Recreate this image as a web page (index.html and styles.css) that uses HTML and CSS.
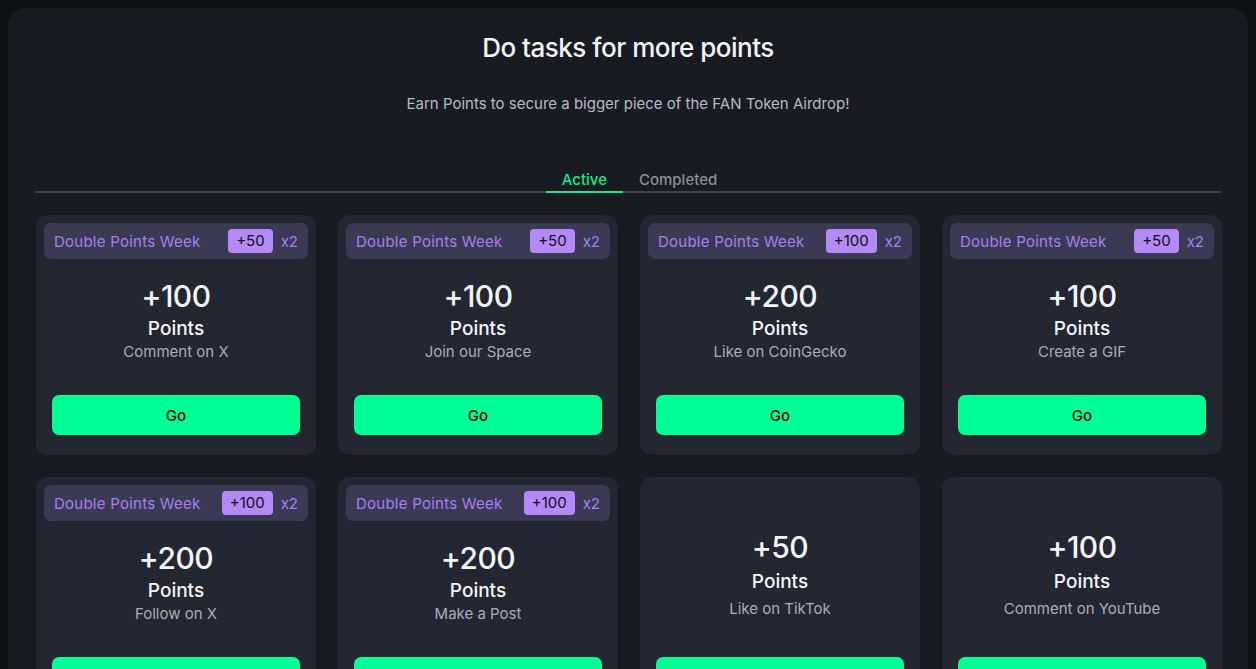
FILE: index.html
```html
<!DOCTYPE html>
<html lang="en">
<head>
<meta charset="utf-8">
<title>Do tasks for more points</title>
<link rel="stylesheet" href="styles.css">
</head>
<body>
<main class="panel">
  <h1 class="title">Do tasks for more points</h1>
  <p class="subtitle">Earn Points to secure a bigger piece of the FAN Token Airdrop!</p>

  <nav class="tabs">
    <button class="tab tab-active">Active</button>
    <button class="tab">Completed</button>
  </nav>

  <section class="grid">
    <article class="card">
      <div class="bonus"><span class="bonus-label">Double Points Week</span><span class="pill">+50</span><span class="mult">x2</span></div>
      <div class="amount">+100</div>
      <div class="unit">Points</div>
      <div class="desc">Comment on X</div>
      <button class="go">Go</button>
    </article>
    <article class="card">
      <div class="bonus"><span class="bonus-label">Double Points Week</span><span class="pill">+50</span><span class="mult">x2</span></div>
      <div class="amount">+100</div>
      <div class="unit">Points</div>
      <div class="desc">Join our Space</div>
      <button class="go">Go</button>
    </article>
    <article class="card">
      <div class="bonus"><span class="bonus-label">Double Points Week</span><span class="pill">+100</span><span class="mult">x2</span></div>
      <div class="amount">+200</div>
      <div class="unit">Points</div>
      <div class="desc">Like on CoinGecko</div>
      <button class="go">Go</button>
    </article>
    <article class="card">
      <div class="bonus"><span class="bonus-label">Double Points Week</span><span class="pill">+50</span><span class="mult">x2</span></div>
      <div class="amount">+100</div>
      <div class="unit">Points</div>
      <div class="desc">Create a GIF</div>
      <button class="go">Go</button>
    </article>

    <article class="card">
      <div class="bonus"><span class="bonus-label">Double Points Week</span><span class="pill">+100</span><span class="mult">x2</span></div>
      <div class="amount">+200</div>
      <div class="unit">Points</div>
      <div class="desc">Follow on X</div>
      <button class="go">Go</button>
    </article>
    <article class="card">
      <div class="bonus"><span class="bonus-label">Double Points Week</span><span class="pill">+100</span><span class="mult">x2</span></div>
      <div class="amount">+200</div>
      <div class="unit">Points</div>
      <div class="desc">Make a Post</div>
      <button class="go">Go</button>
    </article>
    <article class="card card-plain">
      <div class="amount">+50</div>
      <div class="unit">Points</div>
      <div class="desc">Like on TikTok</div>
      <button class="go">Go</button>
    </article>
    <article class="card card-plain">
      <div class="amount">+100</div>
      <div class="unit">Points</div>
      <div class="desc">Comment on YouTube</div>
      <button class="go">Go</button>
    </article>
  </section>
</main>
</body>
</html>
```

FILE: styles.css
```css
* { box-sizing: border-box; }

html, body {
  margin: 0;
  padding: 0;
  background: #0d1013;
}

body {
  padding: 8px;
  font-family: Inter, "Noto Sans", "Liberation Sans", sans-serif;
  color: #f2f3f5;
}

.panel {
  background: #181b22;
  border-radius: 16px;
  padding: 24px 27px 40px;
  min-height: 900px;
}

.title {
  margin: 0;
  text-align: center;
  font-size: 26px;
  line-height: 32px;
  font-weight: 500;
  color: #f4f5f7;
  letter-spacing: -0.5px;
}

.subtitle {
  margin: 30px 0 0;
  text-align: center;
  font-size: 15px;
  line-height: 20px;
  color: #b7bac3;
}

.tabs {
  margin-top: 56px;
  display: flex;
  justify-content: center;
  padding-left: 23px;
  border-bottom: 2px solid #3e4152;
}

.tab {
  background: none;
  border: none;
  border-bottom: 2px solid transparent;
  margin-bottom: -2px;
  padding: 0 16px 1px;
  font-family: inherit;
  font-size: 15px;
  line-height: 20px;
  font-weight: 500;
  color: #8a8e9b;
  cursor: pointer;
}

.tab-active {
  color: #14e98d;
  border-bottom-color: #14e98d;
}

.grid {
  margin: 22px -1px 0 1px;
  display: grid;
  grid-template-columns: repeat(4, 1fr);
  gap: 22px;
}

.card {
  background: #222731;
  border-radius: 12px;
  padding: 8px 8px 20px;
  height: 240px;
  display: flex;
  flex-direction: column;
  align-items: stretch;
  text-align: center;
}

.bonus {
  height: 36px;
  background: #3b3a55;
  border-radius: 7px;
  display: flex;
  align-items: center;
  padding: 0 10px;
  color: #a77ff0;
  font-size: 15px;
}

.bonus-label {
  flex: 1;
  text-align: left;
  letter-spacing: 0.25px;
}

.pill {
  background: #b38af6;
  color: #101014;
  border-radius: 4px;
  height: 24px;
  line-height: 24px;
  padding: 0 8px;
  font-size: 15px;
}

.mult {
  margin-left: 8px;
}

.amount {
  margin-top: 19px;
  font-size: 30px;
  line-height: 36px;
  font-weight: 500;
  color: #f4f5f7;
  letter-spacing: -0.5px;
}

.unit {
  margin-top: 3px;
  font-size: 19px;
  line-height: 24px;
  font-weight: 500;
  color: #f4f5f7;
}

.desc {
  margin-top: 1px;
  font-size: 15px;
  line-height: 20px;
  color: #a9adb7;
}

.card-plain .amount { margin-top: 44px; }
.card-plain .unit { margin-top: 5px; }
.card-plain .desc { margin-top: 5px; }

.go {
  margin: auto 8px 0;
  height: 40px;
  border: none;
  border-radius: 7px;
  background: #00ff94;
  color: #0b0d0c;
  font-family: inherit;
  font-size: 15px;
  font-weight: 500;
  cursor: pointer;
}
```
